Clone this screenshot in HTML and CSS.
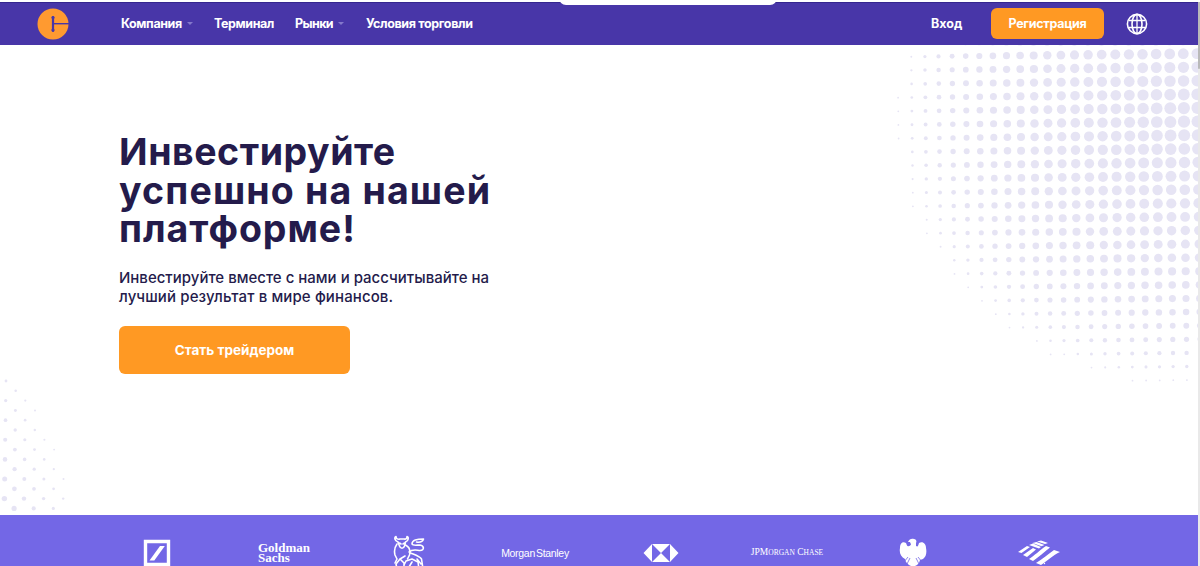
FILE: index.html
```
<!DOCTYPE html>
<html lang="ru">
<head>
    <meta charset="UTF-8">
    <meta name="viewport" content="width=device-width, initial-scale=1.0">
    <title>Инвестируйте успешно</title>
    <link rel="stylesheet" href="styles.css">
</head>
<body>
    <div class="page">
        <header class="header">
            <a class="logo" href="#">
                <svg width="32" height="32" viewBox="0 0 32 32">
                    <circle cx="16" cy="16" r="15.5" fill="#ff9a30"/>
                    <path d="M16 9v14" stroke="#4836a8" stroke-width="2.2" stroke-linecap="round"/>
                    <path d="M16 15.700h16" stroke="#4836a8" stroke-width="1.4"/>
                    <circle cx="16" cy="9.500" r="1.6" fill="#4836a8"/>
                    <circle cx="16" cy="22" r="1.6" fill="#4836a8"/>
                </svg>
            </a>
            <nav class="nav">
                <a class="nav-company" href="#">Компания</a>
                <a class="nav-terminal" href="#">Терминал</a>
                <a class="nav-markets" href="#">Рынки</a>
                <a class="nav-terms" href="#">Условия торговли</a>
            </nav>
            <a class="login" href="#">Вход</a>
            <a class="register" href="#"><span>Регистрация</span></a>
            <a class="globe" href="#">
                <svg width="22" height="22" viewBox="0 0 22 22" fill="none" stroke="#fff" stroke-width="1.6">
                    <circle cx="11" cy="11" r="9.6"/>
                    <ellipse cx="11" cy="11" rx="5" ry="9.6"/>
                    <path d="M11 1.4v19.2M2.8 7.500h16.4M2.8 14.500h16.4" stroke-width="1.3"/>
                </svg>
            </a>
            <div class="browser-tab"></div>
        </header>

        <main class="hero">
            <svg class="dots" id="dots" width="1198" height="470" viewBox="0 45 1198 470"></svg>
            <div class="hero-text">
                <h1><span class="h-one">Инвестируйте</span><br><span class="h-two">успешно на нашей</span><br><span class="h-three">платформе!</span></h1>
                <p><span class="p-one">Инвестируйте вместе с нами и рассчитывайте на</span><br><span class="p-two">лучший результат в мире финансов.</span></p>
                <a class="cta" href="#">Стать трейдером</a>
            </div>
        </main>

        <section class="partners">
            <div class="partner">
                <svg width="28" height="28" viewBox="0 0 28 28">
                    <path d="M2.5 2.5h23v23h-23z" fill="none" stroke="#fff" stroke-width="3.4"/>
                    <path d="M6.5 21.5L17 7h4.8L11.3 21.5z" fill="#fff"/>
                </svg>
            </div>
            <div class="partner goldman"><span>Goldman</span><span>Sachs</span></div>
            <div class="partner">
                <svg width="32" height="36" viewBox="0 0 32 36" fill="none" stroke="#fff" stroke-width="1.6" stroke-linecap="round" stroke-linejoin="round">
                    <path d="M5 7C1.500 6 1 2 3 1.500c0 2.500 2 3 4 2.500h4c2 .5 3-.5 3-2.500 2 .5 1.500 4.500-1.500 5.500l-1 4c-1 3-4 3-5 0L5 7"/>
                    <path d="M6.500 8l1.500 1M11.500 8L10 9"/>
                    <path d="M4 9c-3 4-3 7-2 11l2 4-2 4M12.500 10c4 2 5 6 4 10l-2 4"/>
                    <path d="M16 17c3-3 6-2 11-1.500 5 0 4-5 0-5.500-3 0-7 1-8-1 0-4 5-5 11.500-5-1 3-4 3.500-7 3"/>
                    <path d="M17.500 18c5 2 9 3 11 6l1.500 10M4 34l-1-5 4-5 4 4v6M11 30l2-4 6-2 6 3 1 7M16 32l3-5M24 24l4 5M7 24l5-3"/>
                </svg>
            </div>
            <div class="partner morgan"><span>Morgan</span><b>Stanley</b></div>
            <div class="partner">
                <svg width="36" height="20" viewBox="0 0 36 20" fill="#fff">
                    <path d="M9 1v18L.5 10zM27 1v18l8.500-9zM9 1h18l-9 9zM9 19h18l-9-9z"/>
                </svg>
            </div>
            <div class="partner chase">JPM<small>ORGAN</small> C<small>HASE</small></div>
            <div class="partner">
                <svg width="28" height="30" viewBox="0 0 28 30">
                    <path d="M9 4c1-3 4-4 6-3 2 0 3 2 2 4v3c2 1 2 0 3-3 4-2 7 1 7 5 1 5 0 9-3 11l-3 1-1 3-2 2-4 2-4-2-3-3-1-3c-4-2-6-6-5-11 0-4 2-7 6-5 1 2 1 4 3 3 2 0 2-2 1-4z" fill="#fff"/>
                    <path d="M5 24l4-5M8 26l3-6M23 24l-4-5M20 26l-3-6" stroke="#7367e6" stroke-width=".8"/>
                    <path d="M8 5c1 1 3 0 4 1-1 2-3 2-4-1z" fill="#7367e6"/>
                </svg>
            </div>
            <div class="partner">
                <svg width="42" height="26" viewBox="0 0 42 26" fill="#fff">
                    <path d="M0 12L9 6l3 1L3.500 13zM5 15l10-7 3 1.500L9 17zM11 19C16 16 22 10 28 6l4 1.500C26 12 21 17 15 21zM18 23c7-4 12-9 18-13l6 2c-7 3-13 9-19 13z"/>
                    <path d="M11 5l4-1.500 8 3.500-2 1.500zM14.500 3l4-1 8 3-3 1.200zM19 1.500l4-1 7 2.500-3 1z"/>
                    <circle cx="26.500" cy="23.500" r=".7"/>
                </svg>
            </div>
        </section>
        <div class="scroll"><div class="thumb"></div></div>
    </div>
    <script>
        const dots = document.getElementById("dots");
        let circles = "";

        function addDot(x, y, r) {
            circles += `<circle cx="${x.toFixed(1)}" cy="${y.toFixed(1)}" r="${r.toFixed(2)}"/>`;
        }

        // right side: the dots shrink as they get further from the edge of the page
        for (let row = -1; row < 25; row++) {
            for (let col = -1; col < 22; col++) {
                const x = 911.3 + 13.6 * col + 0.15 * row;
                const y = 56.7 + 13.6 * row - 0.15 * col;
                const t = 1 - Math.hypot(x - 1189, (y - 118) * 1.09) / 292.5;
                if (t > 0) {
                    addDot(x, y, Math.max(0.9, 6.2 * Math.pow(t, 0.5)));
                }
            }
        }

        // left side: staggered small dots
        for (let row = 0; row < 14; row++) {
            for (let col = row % 2; col < 7; col += 2) {
                const r = 1.3 + 0.11 * row - 0.25 * col;
                if (r > 0.8) {
                    addDot(6 + 9.8 * col - 0.13 * row, 381 + 9.8 * row, r + 0.1);
                }
            }
        }
        dots.innerHTML = circles;
    </script>
</body>
</html>
```
FILE: styles.css
```
*{
    box-sizing: border-box;
}
body
{
    margin: 0;
    background-color: #fff;
    font-family: Inter, "Noto Sans", sans-serif;
    overflow: hidden;
}
a
{
    color: inherit;
    text-decoration: none;
}
svg
{
    display: block;
}
.page
{
    position: relative;
    height: 566px;
    padding: 2px 2px 0 0;
    overflow: hidden;
}
.header
{
    position: relative;
    display: flex;
    align-items: center;
    height: 43px;
    padding: 0 0 1px 37px;
    background-color: #4836a8;
    border-top: 1px solid #35268f;
    color: #fff;
    font-size: 12.5px;
    font-weight: 700;
    white-space: nowrap;
}
.logo
{
    width: 84px;
}
.nav
{
    display: flex;
    width: 810px;
}
.nav-company, .nav-markets
{
    display: flex;
    align-items: center;
    gap: 5px;
}
.nav-company::after, .nav-markets::after
{
    content: "";
    border: 3.5px solid transparent;
    border-top-color: #8478cb;
    border-bottom: 0;
}
.nav-company
{
    width: 93px;
    letter-spacing: -0.4px;
}
.nav-terminal
{
    width: 81px;
    letter-spacing: -0.4px;
}
.nav-markets
{
    width: 71px;
    letter-spacing: -0.6px;
}
.nav-terms
{
    letter-spacing: -0.35px;
}
.login
{
    width: 60px;
}
.register
{
    display: flex;
    align-items: center;
    justify-content: center;
    width: 113px;
    height: 31px;
    border-radius: 6px;
    background-color: #ff9923;
    letter-spacing: -0.3px;
}
.globe
{
    margin-left: 22px;
}
.browser-tab
{
    position: absolute;
    left: 559px;
    top: -5px;
    width: 218px;
    height: 7px;
    border-radius: 0 0 8px 8px;
    background-color: #fff;
}
.hero
{
    position: relative;
    height: 470px;
    padding: 88px 0 0 119px;
    color: #241b4b;
}
.dots
{
    position: absolute;
    left: 0;
    top: 0;
    fill: #e6e4f4;
}
.hero-text
{
    position: relative;
    white-space: nowrap;
}
h1
{
    margin: 0;
    font-size: 37.5px;
    line-height: 38.5px;
    font-weight: 700;
}
.h-one
{
    letter-spacing: 0.55px;
}
.h-two
{
    letter-spacing: 1.15px;
}
.h-three
{
    letter-spacing: 0.95px;
}
p
{
    margin: 19.5px 0 0;
    font-size: 15px;
    line-height: 19px;
    font-weight: 500;
}
.p-two
{
    letter-spacing: 0.12px;
}
.cta
{
    display: flex;
    align-items: center;
    justify-content: center;
    width: 231px;
    height: 48px;
    margin-top: 20px;
    border-radius: 6px;
    background-color: #ff9923;
    color: #fff;
    font-size: 13.5px;
    font-weight: 700;
}
.partners
{
    display: grid;
    grid-template-columns: repeat(8, 126px);
    height: 74px;
    padding-left: 94px;
    background-color: #7367e6;
    color: #fff;
}
.partner
{
    display: flex;
    align-items: center;
    justify-content: center;
    padding-bottom: 1px;
    white-space: nowrap;
}
.goldman
{
    flex-direction: column;
    align-items: flex-start;
    padding-left: 38px;
    font: 700 13px/10px "Liberation Serif", serif;
}
.morgan
{
    font-family: "Liberation Sans", sans-serif;
    font-size: 10.5px;
    letter-spacing: -0.3px;
}
.morgan b
{
    margin-left: 1px;
    font-weight: 400;
}
.chase
{
    display: block;
    text-align: center;
    font: 9.5px/74px "Liberation Serif", serif;
}
.chase small
{
    font-size: 7.5px;
}
.scroll
{
    position: absolute;
    right: 0;
    top: 2px;
    width: 2px;
    height: 564px;
    background-color: #e9e9e9;
}
.thumb
{
    height: 67px;
    border-radius: 0 0 2px 2px;
    background-color: #b9b9b9;
}
```
